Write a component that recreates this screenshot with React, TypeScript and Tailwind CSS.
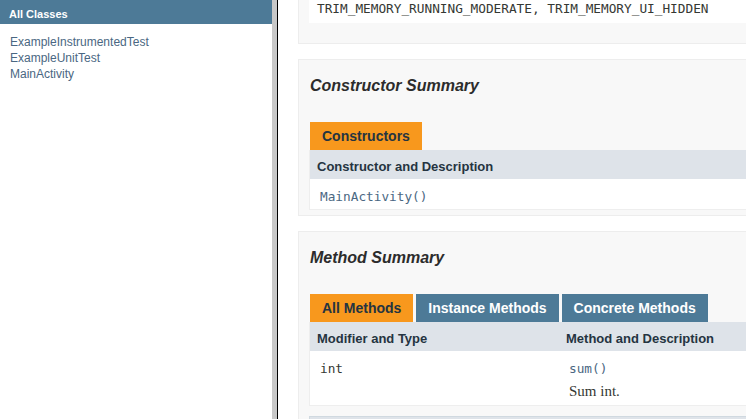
const sans = { fontFamily: '"Liberation Sans", Arial, sans-serif' }

const classes = ['ExampleInstrumentedTest', 'ExampleUnitTest', 'MainActivity']

function Tab({ label, active }: { label: string; active?: boolean }) {
  return (
    <span
      className={
        'h-[28px] px-[12px] flex items-center text-[14px] font-bold leading-none ' +
        (active ? 'bg-[#f8981d] text-[#253441]' : 'bg-[#4d7a97] text-white')
      }
    >
      {label}
    </span>
  )
}

function HeadCell({ children }: { children: React.ReactNode }) {
  return <div className="pt-[8px] pb-[3px] pl-[7px] leading-[18px] text-[13px] font-bold text-[#253441]">{children}</div>
}

export default function App() {
  return (
    <div className="flex w-[746px] h-[419px] overflow-hidden bg-white text-[#353833]" style={sans}>
      {/* class list frame */}
      <div className="w-[272px] shrink-0">
        <h1 className="h-[24px] pt-[9px] pl-[9px] bg-[#4d7a97] text-white text-[11px] leading-[11px] font-bold">
          All Classes
        </h1>
        <ul className="pt-[10px] pl-[10px] text-[12px] leading-[16px] text-[#4a6782]">
          {classes.map(c => (
            <li key={c}>{c}</li>
          ))}
        </ul>
      </div>

      {/* frame divider */}
      <div className="w-[5px] shrink-0 bg-[#c8c8c8]" />
      <div className="w-[1px] shrink-0 bg-black" />

      {/* class detail frame */}
      <div className="flex-1 overflow-hidden pl-[20px]">
        <div className="w-[640px]">
          {/* fields inherited (scrolled) */}
          <div className="border-x border-b border-[#ededed] bg-[#f8f8f8] pl-[10px] pb-[20px]">
            <div className="h-[23px] bg-white pl-[8px] font-['DejaVu_Sans_Mono',monospace] text-[12.75px] leading-[17px]">
              TRIM_MEMORY_RUNNING_MODERATE, TRIM_MEMORY_UI_HIDDEN
            </div>
          </div>

          {/* constructor summary */}
          <div className="mt-[15px] border border-[#ededed] bg-[#f8f8f8] pl-[10px] pb-[5px]">
            <h3 className="pt-[16px] mb-[26px] pl-[1px] text-[16px] leading-[20px] font-bold italic text-[#2c2c2c]">Constructor Summary</h3>
            <div className="flex pl-[1px]">
              <Tab label="Constructors" active />
            </div>
            <div className="border-l border-b border-[#eeeeee]">
              <div className="bg-[#dee3e9]">
                <HeadCell>Constructor and Description</HeadCell>
              </div>
              <div className="bg-white pt-[8px] pb-[3px] pl-[10px] leading-[19px] font-['DejaVu_Sans_Mono',monospace] text-[12.75px] text-[#4a6782]">
                MainActivity()
              </div>
            </div>
          </div>

          {/* method summary */}
          <div className="mt-[15px] border border-[#ededed] bg-[#f8f8f8] pl-[10px] pb-[5px]">
            <h3 className="pt-[16px] mb-[26px] pl-[1px] text-[16px] leading-[20px] font-bold italic text-[#2c2c2c]">Method Summary</h3>
            <div className="flex gap-[3px] pl-[1px]">
              <Tab label="All Methods" active />
              <Tab label="Instance Methods" />
              <Tab label="Concrete Methods" />
            </div>
            <div className="border-l border-b border-[#eeeeee]">
              <div className="grid grid-cols-[249px_1fr] bg-[#dee3e9]">
                <HeadCell>Modifier and Type</HeadCell>
                <HeadCell>Method and Description</HeadCell>
              </div>
              <div className="grid grid-cols-[249px_1fr] bg-white pt-[8px] pb-[3px]">
                <div className="pl-[10px] leading-[19px] font-['DejaVu_Sans_Mono',monospace] text-[12.75px]">int</div>
                <div className="pl-[10px]">
                  <div className="leading-[19px] font-['DejaVu_Sans_Mono',monospace] text-[12.75px] text-[#4a6782]">sum()</div>
                  <div className="mt-[4px] mb-[1px] leading-[19px] text-[15px] font-['Liberation_Serif',serif]">Sum int.</div>
                </div>
              </div>
            </div>
            <div className="mt-[10px] h-[40px] border-l border-t border-[#d0d9e0] bg-[#dee3e9]" />
          </div>
        </div>
      </div>
    </div>
  )
}
